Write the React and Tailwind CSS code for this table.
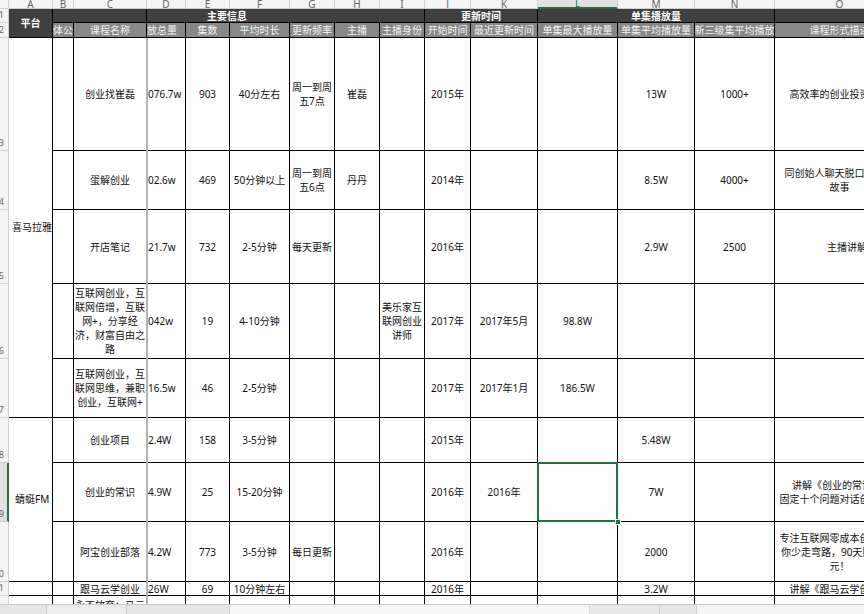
import React from "react";

const COLS =
  "grid-cols-[9px_44px_21px_73px_39px_44px_60px_45px_45px_45px_46px_67px_80px_77px_80px_130px]";
const ROWS =
  "grid-rows-[9px_14px_15px_113px_59px_74px_75px_59px_45px_59px_60px_14px_60px]";

const letters = ["A", "B", "C", "D", "E", "F", "G", "H", "I", "J", "K", "L", "M", "N", "O"];

const subHeads = [
  "体公",
  "课程名称",
  "放总量",
  "集数",
  "平均时长",
  "更新频率",
  "主播",
  "主播身份",
  "开始时间",
  "最近更新时间",
  "单集最大播放量",
  "单集平均播放量",
  "新三级集平均播放",
  "课程形式描述",
];

const rows = [
  {
    n: 3,
    group: { label: "喜马拉雅", span: "row-span-5", pad: "pl-[3px]" },
    cells: ["", "创业找崔磊", "076.7w", "903", "40分左右", "周一到周\n五7点", "崔磊", "", "2015年", "", "", "13W", "1000+", "高效率的创业投资决策"],
  },
  {
    n: 4,
    cells: ["", "蛋解创业", "02.6w", "469", "50分钟以上", "周一到周\n五6点", "丹丹", "", "2014年", "", "", "8.5W", "4000+", "同创始人聊天脱口秀式讲\n故事"],
  },
  {
    n: 5,
    oLeft: true,
    cells: ["", "开店笔记", "21.7w", "732", "2-5分钟", "每天更新", "", "", "2016年", "", "", "2.9W", "2500", "主播讲解开店心得"],
  },
  {
    n: 6,
    cells: [
      "",
      "互联网创业，互\n联网倍增，互联\n网+，分享经\n济，财富自由之\n路",
      "042w",
      "19",
      "4-10分钟",
      "",
      "",
      "美乐家互\n联网创业\n讲师",
      "2017年",
      "2017年5月",
      "98.8W",
      "",
      "",
      "",
    ],
  },
  {
    n: 7,
    cells: ["", "互联网创业，互\n联网思维，兼职\n创业，互联网+", "16.5w", "46", "2-5分钟", "", "", "", "2017年", "2017年1月", "186.5W", "", "", ""],
  },
  {
    n: 8,
    group: { label: "蜻蜓FM", span: "row-span-3", pad: "pl-[6px]" },
    cells: ["", "创业项目", "2.4W", "158", "3-5分钟", "", "", "", "2015年", "", "", "5.48W", "", ""],
  },
  {
    n: 9,
    sel: true,
    cells: ["", "创业的常识", "4.9W", "25", "15-20分钟", "", "", "", "2016年", "2016年", "", "7W", "", "讲解《创业的常识》，\n固定十个问题对话创业嘉宾"],
  },
  {
    n: 10,
    cells: ["", "阿宝创业部落", "4.2W", "773", "3-5分钟", "每日更新", "", "", "2016年", "", "", "2000", "", "专注互联网零成本创业，带\n你少走弯路，90天赚到1万\n元！"],
  },
  {
    n: 11,
    group: { label: "", span: "", pad: "" },
    cells: ["", "跟马云学创业", "26W", "69", "10分钟左右", "", "", "", "2016年", "", "", "3.2W", "", "讲解《跟马云学创业》"],
  },
  {
    n: 12,
    group: { label: "", span: "", pad: "" },
    top: true,
    cells: ["", "永不放弃：马云\n的创业故事", "", "", "", "", "", "", "", "", "", "", "", ""],
  },
];

function RowNum({ n, sel }) {
  return (
    <div
      className={
        sel
          ? "flex items-end justify-end overflow-hidden border-r-2 border-b border-r-[#217346] border-b-[#d0d0d0] bg-[#e1e1e1] pr-[3px] pb-[3px]"
          : "flex items-end justify-end overflow-hidden border-r border-b border-[#d0d0d0] bg-[#f4f4f4] pr-[4px] pb-[3px]"
      }
    >
      <span className="text-[9px] leading-[9px] text-[#666]">{n}</span>
    </div>
  );
}

function DataCell({ value, col, row }) {
  const isD = col === 2;
  const isO = col === 13;
  const selected = row.sel && col === 10;
  let align = "justify-center text-center";
  if (isD) align = "justify-start text-left pl-[1px]";
  if (isO && row.oLeft) align = "justify-start text-left pl-[52px]";
  const vert = row.top ? "items-start pt-[2px]" : "items-center";

  if (selected) {
    return (
      <div className="relative z-10 border-r border-b border-black bg-white">
        <div className="absolute -top-[1px] -left-[1px] -right-[1px] -bottom-[1px] border-2 border-[#217346]" />
        <div className="absolute -right-[4px] -bottom-[4px] h-[6px] w-[6px] border border-white bg-[#217346]" />
      </div>
    );
  }

  return (
    <div className={`flex ${vert} ${align} overflow-hidden whitespace-pre border-r border-b border-black bg-white leading-[14px]`}>
      {value}
    </div>
  );
}

export default function App() {
  return (
    <div className="flex h-[614px] w-[864px] flex-col overflow-hidden bg-white font-['Noto_Sans','Noto_Sans_CJK_SC',sans-serif] text-[10px] text-[#111]">
      <div className={`relative grid h-[604px] w-[905px] flex-none overflow-hidden ${COLS} ${ROWS}`}>
        {/* column letters */}
        <div className="border-r border-b border-[#d0d0d0] bg-[#f4f4f4]" />
        {letters.map((l) => (
          <div
            key={l}
            className={
              l === "L"
                ? "flex items-end justify-center overflow-hidden border-r border-b-2 border-r-[#d0d0d0] border-b-[#217346] bg-[#e1e1e1] text-[10px] leading-[8px] text-[#217346]"
                : "flex items-end justify-center overflow-hidden border-r border-b border-[#d0d0d0] bg-[#f4f4f4] text-[10px] leading-[8px] text-[#666]"
            }
          >
            {l}
          </div>
        ))}

        {/* header row 1 */}
        <RowNum n={1} />
        <div className="row-span-2 flex items-center justify-center border-r border-b border-black bg-[#3f3f3f] font-bold text-white">
          平台
        </div>
        <div className="col-span-2 border-r border-b border-black bg-[#3f3f3f]" />
        <div className="col-span-6 flex items-center border-r border-b border-black bg-[#3f3f3f] pl-[60px] font-bold leading-[12px] text-white">
          主要信息
        </div>
        <div className="col-span-2 flex items-center justify-center border-r border-b border-black bg-[#3f3f3f] font-bold leading-[12px] text-white">
          更新时间
        </div>
        <div className="col-span-3 flex items-center justify-center border-r border-b border-black bg-[#3f3f3f] font-bold leading-[12px] text-white">
          单集播放量
        </div>
        <div className="border-r border-b border-black bg-[#3f3f3f]" />

        {/* header row 2 */}
        <RowNum n={2} />
        {subHeads.map((h, i) => (
          <div
            key={h}
            className={`flex items-center overflow-hidden whitespace-nowrap border-r border-b border-black bg-[#878787] leading-[13px] text-[#f4f4f4] ${
              i === 0 || i === 2 ? "justify-start" : "justify-center"
            }`}
          >
            {h}
          </div>
        ))}

        {/* data rows */}
        {rows.map((row) => (
          <React.Fragment key={row.n}>
            <RowNum n={row.n} sel={row.sel} />
            {row.group && (
              <div className={`${row.group.span} flex items-center border-r border-b border-black bg-white ${row.group.pad}`}>
                {row.group.label}
              </div>
            )}
            {row.cells.map((v, i) => (
              <DataCell key={i} value={v} col={i} row={row} />
            ))}
          </React.Fragment>
        ))}

        {/* freeze pane line */}
        <div className="absolute top-[38px] bottom-0 left-[146px] w-[2px] bg-[#b4b4b4]" />
      </div>

      {/* bottom scroll / tab strip */}
      <div className="flex h-[10px] flex-none border-t border-[#c8c8c8] bg-[#f4f4f4]">
        <div className="w-[47px] border-r border-[#cfcfcf] bg-[#e6e6e6]" />
        <div className="w-[80px] border-r border-[#cfcfcf] bg-[#ececec]" />
        <div className="w-[103px] border-r border-[#cfcfcf] bg-[#e6e6e6]" />
        <div className="w-[360px] border-r border-[#dcdcdc] bg-[#f7f7f7]" />
        <div className="w-[70px] border-r border-[#cfcfcf] bg-[#e9e9e9]" />
        <div className="w-[37px] border-r border-[#cfcfcf] bg-[#e6e6e6]" />
        <div className="flex-1 bg-[#f4f4f4]" />
      </div>
    </div>
  );
}
